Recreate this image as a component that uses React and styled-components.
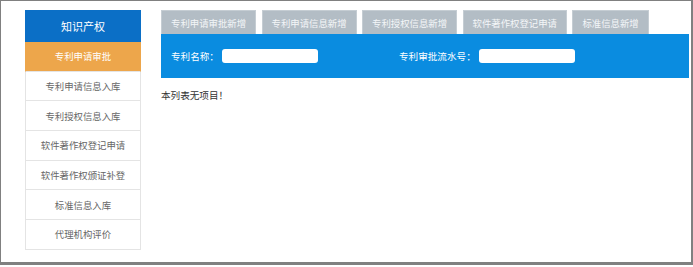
import React from "react";
import styled, {createGlobalStyle} from "styled-components";

const GlobalStyle = createGlobalStyle`
  html, body {
    margin: 0;
    padding: 0;
    background: #ffffff;
    font-family: "Noto Sans CJK SC", "Noto Sans", sans-serif;
  }
`;

const menuItems = [
    "专利申请审批",
    "专利申请信息入库",
    "专利授权信息入库",
    "软件著作权登记申请",
    "软件著作权颁证补登",
    "标准信息入库",
    "代理机构评价"
];

const tabs = [
    "专利申请审批新增",
    "专利申请信息新增",
    "专利授权信息新增",
    "软件著作权登记申请",
    "标准信息新增"
];

export default function App() {
    return (
        <>
            <GlobalStyle/>
            <Frame>
                <Sidebar>
                    <SideHeader>知识产权</SideHeader>
                    {menuItems.map((item, i) => (
                        <SideItem key={item} $active={i === 0}>{item}</SideItem>
                    ))}
                </Sidebar>

                <Main>
                    <TabRow>
                        {tabs.map((tab) => (
                            <Tab key={tab}>{tab}</Tab>
                        ))}
                    </TabRow>
                    <SearchBar>
                        <Field>
                            <Label>专利名称：</Label>
                            <Input/>
                        </Field>
                        <Field>
                            <Label>专利审批流水号：</Label>
                            <Input/>
                        </Field>
                    </SearchBar>
                    <Empty>本列表无项目！</Empty>
                </Main>
            </Frame>
        </>
    );
}

const Frame = styled.div`
  box-sizing: border-box;
  width: 693px;
  height: 265px;
  border-top: 1px solid #808080;
  border-left: 1px solid #808080;
  border-right: 2px solid #808080;
  border-bottom: 3px solid #808080;
  padding: 9px 2px 0 24px;
  display: flex;
  align-items: flex-start;
  gap: 20px;
`;

const Sidebar = styled.div`
  width: 116px;
  flex-shrink: 0;
  display: flex;
  flex-direction: column;
`;

const SideHeader = styled.div`
  height: 32px;
  background: #0b6fc6;
  color: #ffffff;
  font-size: 11px;
  display: flex;
  align-items: center;
  justify-content: center;
`;

const SideItem = styled.div`
  box-sizing: border-box;
  height: 29.7px;
  display: flex;
  align-items: center;
  justify-content: center;
  font-size: 9.4px;
  color: ${p => p.$active ? "#ffffff" : "#666666"};
  background: ${p => p.$active ? "#eda64b" : "#ffffff"};
  border-left: 1px solid ${p => p.$active ? "#eda64b" : "#e4e4e4"};
  border-right: 1px solid ${p => p.$active ? "#eda64b" : "#e4e4e4"};
  border-bottom: 1px solid #e4e4e4;
`;

const Main = styled.div`
  flex: 1;
  display: flex;
  flex-direction: column;
`;

const TabRow = styled.div`
  display: flex;
  gap: 5.5px;
`;

const Tab = styled.div`
  box-sizing: border-box;
  height: 24px;
  padding: 0 9px;
  background: #b3bdc5;
  border: 1px solid #c5cdd3;
  border-bottom: none;
  color: #f4f6f8;
  font-size: 9.4px;
  display: flex;
  align-items: center;
`;

const SearchBar = styled.div`
  height: 44px;
  background: #0a8ce0;
  padding-left: 10px;
  display: flex;
  align-items: center;
`;

const Field = styled.div`
  width: 228px;
  display: flex;
  align-items: center;
`;

const Label = styled.span`
  color: #ffffff;
  font-size: 9.6px;
  margin-right: 3px;
`;

const Input = styled.div`
  width: 96px;
  height: 14px;
  background: #ffffff;
  border-radius: 3px;
`;

const Empty = styled.div`
  margin-top: 10px;
  font-size: 9.6px;
  color: #333333;
`;
